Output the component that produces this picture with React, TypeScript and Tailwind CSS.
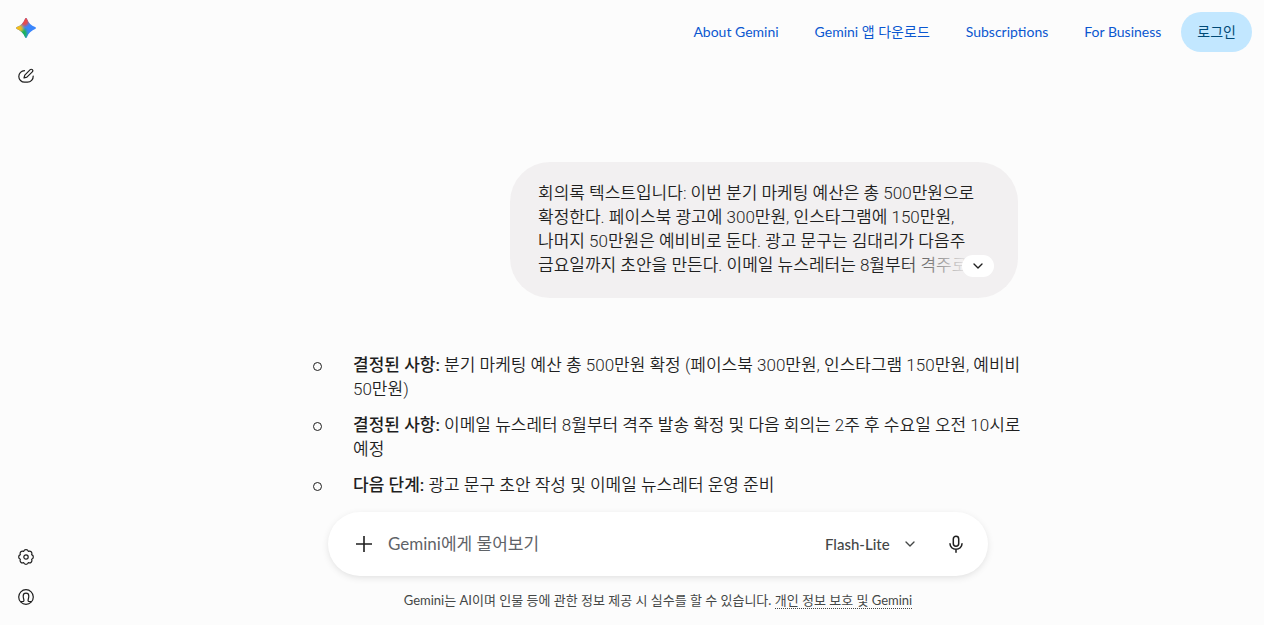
import { ChevronDown } from 'lucide-react';

type Item = {
    id: number;
    label: string;
    text: string;
};

const links = [
    { title: 'About Gemini', href: '#about' },
    { title: 'Gemini 앱 다운로드', href: '#download' },
    { title: 'Subscriptions', href: '#subscriptions' },
    { title: 'For Business', href: '#business' },
];

const prompt =
    '회의록 텍스트입니다: 이번 분기 마케팅 예산은 총 500만원으로 확정한다. 페이스북 광고에 300만원, 인스타그램에 150만원, 나머지 50만원은 예비비로 둔다. 광고 문구는 김대리가 다음주 금요일까지 초안을 만든다. 이메일 뉴스레터는 8월부터 격주로';

const items: Item[] = [
    {
        id: 1,
        label: '결정된 사항:',
        text: '분기 마케팅 예산 총 500만원 확정 (페이스북 300만원, 인스타그램 150만원, 예비비 50만원)',
    },
    {
        id: 2,
        label: '결정된 사항:',
        text: '이메일 뉴스레터 8월부터 격주 발송 확정 및 다음 회의는 2주 후 수요일 오전 10시로 예정',
    },
    {
        id: 3,
        label: '다음 단계:',
        text: '광고 문구 초안 작성 및 이메일 뉴스레터 운영 준비',
    },
];

function Spark() {
    return (
        <svg viewBox="0 0 24 24" className="h-6 w-6" aria-hidden="true">
            <defs>
                <clipPath id="spark">
                    <path d="M12 2c.5 0 .8.3 1 .9c1.600 4 4.100 6.500 8.100 8.100.6.2.9.5.9 1s-.3.800-.9 1c-4 1.600-6.500 4.100-8.100 8.100-.2.6-.5.9-1 .9s-.8-.3-1-.9c-1.600-4-4.100-6.500-8.100-8.100-.6-.2-.9-.5-.9-1s.3-.8.900-1c4-1.600 6.500-4.100 8.100-8.100.2-.6.5-.9 1-.9z" />
                </clipPath>
                <filter id="soft" x="-50%" y="-50%" width="200%" height="200%">
                    <feGaussianBlur stdDeviation="1.300" />
                </filter>
            </defs>
            <g clipPath="url(#spark)">
                <rect width="24" height="24" fill="#3b86fc" />
                <g filter="url(#soft)">
                    <ellipse cx="10.500" cy="4" rx="4.500" ry="6" fill="#ea4c4c" />
                    <ellipse cx="8.500" cy="18" rx="4.500" ry="6" fill="#1fb45a" />
                    <ellipse cx="3" cy="12" rx="6" ry="4" fill="#f4bc1c" />
                </g>
            </g>
        </svg>
    );
}

function NewChatIcon() {
    return (
        <svg
            viewBox="0 0 16 16"
            className="h-4 w-4"
            fill="none"
            stroke="currentColor"
            strokeWidth="1.200"
            strokeLinecap="round"
            strokeLinejoin="round"
            aria-hidden="true"
        >
            <path d="M6.500 2.700A5.800 5.800 0 0 0 .8 8.400a5.800 5.800 0 0 0 5.800 5.800h2.800A5.800 5.800 0 0 0 15.200 8" />
            <path d="M6 10l.8-2.900L12.200 1.700a1.450 1.450 0 0 1 2.100 2.100L8.900 9.200z" />
        </svg>
    );
}

function SettingsIcon() {
    return (
        <svg
            viewBox="0 0 16 16"
            className="h-4 w-4"
            fill="none"
            stroke="currentColor"
            strokeWidth="1.200"
            strokeLinejoin="round"
            aria-hidden="true"
        >
            <path d="M5.670 2.360A2.450 2.450 0 0 1 10.330 2.360A2.450 2.450 0 0 1 13.640 5.670A2.450 2.450 0 0 1 13.640 10.330A2.450 2.450 0 0 1 10.330 13.640A2.450 2.450 0 0 1 5.670 13.640A2.450 2.450 0 0 1 2.360 10.330A2.450 2.450 0 0 1 2.360 5.670A2.450 2.450 0 0 1 5.670 2.360z" />
            <circle cx="8" cy="8" r="2.200" />
        </svg>
    );
}

function AccountIcon() {
    return (
        <svg
            viewBox="0 0 16 16"
            className="h-4 w-4"
            fill="none"
            stroke="currentColor"
            strokeWidth="1.200"
            strokeLinecap="round"
            aria-hidden="true"
        >
            <circle cx="8" cy="8" r="7.300" />
            <path d="M3.200 12.500h1.300c1.500 0 1.600-.9 1.300-2-.3-1-.6-2.200-.6-3.600a2.800 2.800 0 0 1 5.600 0c0 1.400-.3 2.600-.6 3.600-.3 1.100-.2 2 1.300 2h1.300" />
        </svg>
    );
}

function MicIcon() {
    return (
        <svg
            viewBox="0 0 20 20"
            className="h-5 w-5"
            fill="none"
            stroke="currentColor"
            strokeWidth="1.500"
            strokeLinecap="round"
            aria-hidden="true"
        >
            <rect x="7.300" y="2.200" width="5.400" height="10" rx="2.700" />
            <path d="M4 9.800a6 5.500 0 0 0 12 0M10 15.500v2.800" />
        </svg>
    );
}

export default function App() {
    return (
        <div className="flex h-screen bg-[#fcfcfc] font-['Lato','Noto_Sans_CJK_KR',sans-serif] text-[#1f1f1f]">
            <aside className="flex w-[52px] shrink-0 flex-col items-center justify-between pt-4 pb-5">
                <div className="flex flex-col items-center gap-7">
                    <a href="#home" aria-label="Gemini">
                        <Spark />
                    </a>
                    <button type="button" aria-label="새 채팅">
                        <NewChatIcon />
                    </button>
                </div>
                <div className="flex flex-col items-center gap-6">
                    <button type="button" aria-label="설정">
                        <SettingsIcon />
                    </button>
                    <button type="button" aria-label="계정">
                        <AccountIcon />
                    </button>
                </div>
            </aside>

            <div className="flex min-w-0 flex-1 flex-col">
                <header className="flex h-16 shrink-0 items-center justify-end gap-5 pr-3">
                    <nav className="flex gap-9 text-sm text-[#0b57d0]">
                        {links.map((link) => (
                            <a key={link.href} href={link.href}>
                                {link.title}
                            </a>
                        ))}
                    </nav>
                    <button
                        type="button"
                        className="h-10 rounded-full bg-[#c2e7ff] px-4 text-sm text-[#004a77]"
                    >
                        로그인
                    </button>
                </header>

                <main className="flex min-h-0 flex-1 flex-col items-center">
                    <div className="min-h-0 w-full max-w-[744px] flex-1 overflow-hidden px-3 pt-[98px] font-['Roboto','Noto_Sans_CJK_KR',sans-serif] text-[17px] leading-6 font-[350]">
                        <div className="relative ml-auto max-w-[508px] rounded-[40px] bg-[#f2f0f1] pt-[19px] pr-6 pb-[21px] pl-7">
                            <p className="line-clamp-4 break-keep">{prompt}</p>
                            <div className="absolute right-6 bottom-[21px] flex h-6 w-24 items-end justify-end bg-linear-to-r from-transparent to-[#f2f0f1] to-75%">
                                <button
                                    type="button"
                                    aria-label="펼치기"
                                    className="flex h-[22px] w-8 items-center justify-center rounded-full bg-white"
                                >
                                    <ChevronDown className="h-4 w-4" strokeWidth={2} />
                                </button>
                            </div>
                        </div>

                        <ul className="mt-[55px] -mr-3 space-y-3">
                            {items.map((item) => (
                                <li key={item.id} className="flex">
                                    <span className="mt-[9px] mr-[31px] ml-[15px] h-[9px] w-[9px] shrink-0 rounded-full border border-[#1f1f1f]" />
                                    <p className="break-keep">
                                        <b className="font-medium">{item.label}</b> {item.text}
                                    </p>
                                </li>
                            ))}
                        </ul>
                    </div>

                    <form className="flex h-16 w-full max-w-[660px] shrink-0 items-center rounded-full bg-white pr-[22px] pl-[26px] shadow-[0_2px_8px_-2px_rgba(0,0,0,0.16)]">
                        <button type="button" aria-label="추가" className="mr-3.5">
                            <svg
                                viewBox="0 0 20 20"
                                className="h-5 w-5"
                                stroke="currentColor"
                                strokeWidth="1.600"
                                aria-hidden="true"
                            >
                                <path d="M10 2v16M2 10h16" />
                            </svg>
                        </button>
                        <input
                            type="text"
                            aria-label="프롬프트 입력"
                            placeholder="Gemini에게 물어보기"
                            className="min-w-0 flex-1 text-[17px] outline-none placeholder:text-[#5f6368]"
                        />
                        <div className="relative mr-7 flex items-center">
                            <select
                                aria-label="모델"
                                className="appearance-none bg-transparent pr-7 text-[15px] font-medium text-[#444746] outline-none"
                            >
                                <option>Flash-Lite</option>
                            </select>
                            <ChevronDown
                                className="pointer-events-none absolute right-0 h-4 w-4 text-[#444746]"
                                strokeWidth={2}
                            />
                        </div>
                        <button type="button" aria-label="마이크">
                            <MicIcon />
                        </button>
                    </form>

                    <p className="flex h-[49px] shrink-0 items-center text-[13px] text-[#444746]">
                        <span>
                            Gemini는 AI이며 인물 등에 관한 정보 제공 시 실수를 할 수 있습니다.{' '}
                            <a href="#privacy" className="border-b border-dotted border-[#444746]">
                                개인 정보 보호 및 Gemini
                            </a>
                        </span>
                    </p>
                </main>
            </div>
        </div>
    );
}
